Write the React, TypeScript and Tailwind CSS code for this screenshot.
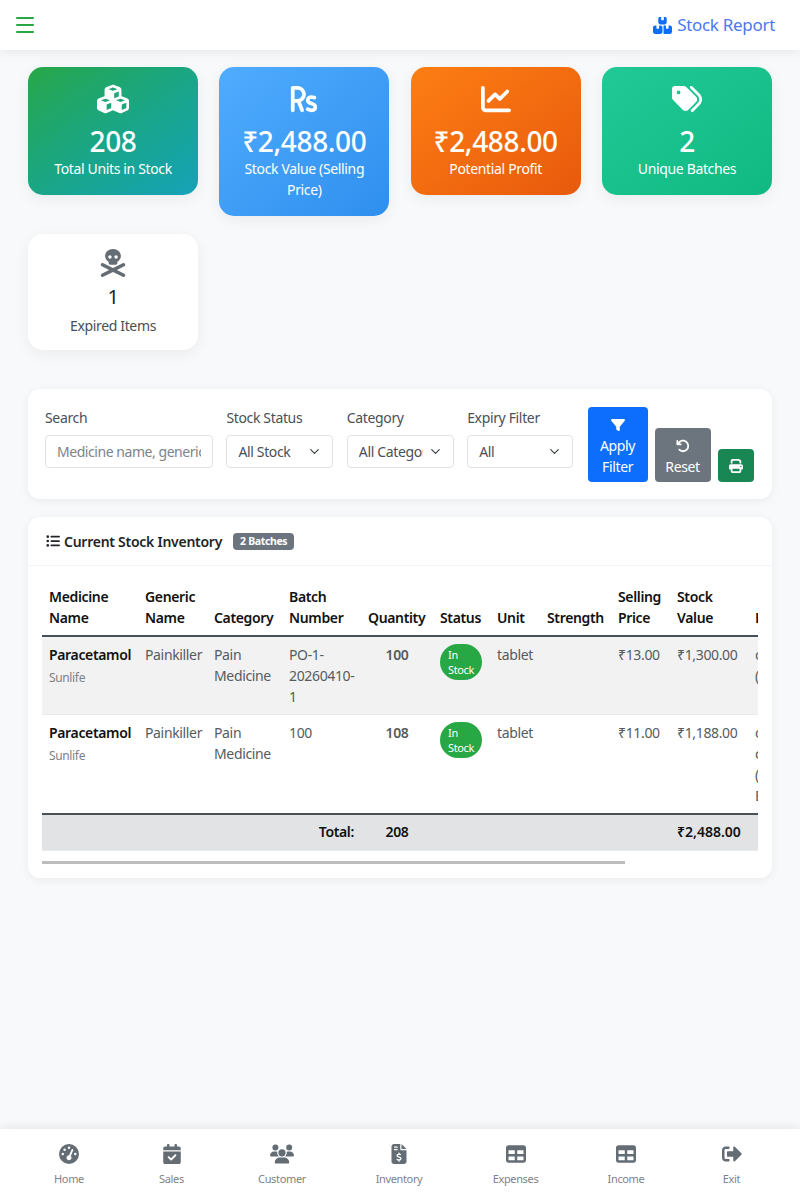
import React from "react";
import { FaCubes, FaRupeeSign, FaChartLine, FaTags, FaSkullCrossbones, FaFilter, FaArrowRotateLeft, FaPrint, FaListUl, FaGaugeHigh, FaCalendarCheck, FaUsers, FaFileInvoiceDollar, FaTable, FaBoxesStacked } from "react-icons/fa6";
import { FaSignOutAlt } from "react-icons/fa";
import { ChevronDown } from "lucide-react";

function Stat({ icon, value, label, bg }: { icon: React.ReactNode; value: string; label: string; bg: string }) {
  return (
    <div className={`rounded-[15px] px-4 pt-4 pb-4 text-center text-white shadow-[0_4px_15px_rgba(0,0,0,0.06)] ${bg}`}>
      <div className="flex h-[32px] items-center justify-center text-[30px]">{icon}</div>
      <div className="mt-[9px] text-[28px] leading-[34px] font-medium">{value}</div>
      <div className="text-[14px] leading-[21px]">{label}</div>
    </div>
  );
}

function Field({ label, value, w }: { label: string; value: string; w: string }) {
  return (
    <div className={`self-start ${w}`}>
      <div className="mb-[7px] text-[14px] leading-[21px] text-[#495057]">{label}</div>
      <div className="relative">
        <select defaultValue={value} className="h-[33px] w-full appearance-none rounded-[4px] border border-[#dee2e6] bg-white pr-[30px] pl-[11px] text-[14px] text-[#495057]">
          <option>{value}</option>
        </select>
        <ChevronDown className="pointer-events-none absolute top-[9px] right-[11px] h-[15px] w-[15px] text-[#343a40]" strokeWidth={1.8} />
      </div>
    </div>
  );
}

const th = "px-[7px] pt-2 pb-[7px] text-left align-bottom font-semibold text-[#111]";
const td = "px-[7px] pt-[7px] pb-[7px] align-top text-[#555b61]";

function Row({ batch, qty, price, value, exp, bg }: { batch: React.ReactNode; qty: string; price: string; value: string; exp: React.ReactNode; bg: string }) {
  return (
    <tr className={`border-b border-[#e9ecef] ${bg}`}>
      <td className={td}>
        <div className="font-semibold text-[#111]">Paracetamol</div>
        <div className="pt-[2px] text-[12px] leading-[21px] text-[#7b8187]">Sunlife</div>
      </td>
      <td className={td}>Painkiller</td>
      <td className={td}>Pain Medicine</td>
      <td className={td}>{batch}</td>
      <td className={`${td} text-center font-semibold text-[#111]`}>{qty}</td>
      <td className={td}>
        <span className="block w-[42px] rounded-[20px] bg-[#28a745] px-[8px] py-[3px] text-[11px] leading-[15px] text-white">In Stock</span>
      </td>
      <td className={td}>tablet</td>
      <td className={td}></td>
      <td className={td}>{price}</td>
      <td className={td}>{value}</td>
      <td className={td}>{exp}</td>
    </tr>
  );
}

function NavItem({ icon, label }: { icon: React.ReactNode; label: string }) {
  return (
    <div className="flex flex-col items-center">
      <div className="flex h-[24px] items-center text-[20px] text-[#646c74]">{icon}</div>
      <div className="mt-[5px] text-[11px] leading-[16px] text-[#7d8389]">{label}</div>
    </div>
  );
}

export default function App() {
  return (
    <div className="relative h-[1200px] overflow-hidden bg-[#f8f9fa] font-['Noto_Sans',sans-serif] tracking-[-0.35px]">
      <header className="flex h-[50px] items-center justify-between bg-white pr-[25px] pl-[16px] shadow-[0_2px_10px_rgba(0,0,0,0.08)]">
        <div className="flex w-[18px] flex-col gap-[5px]">
          <span className="h-[2px] rounded bg-[#28a745]"></span>
          <span className="h-[2px] rounded bg-[#28a745]"></span>
          <span className="h-[2px] rounded bg-[#28a745]"></span>
        </div>
        <div className="flex items-center gap-[5px] text-[17px] text-[#4c78f0]">
          <FaBoxesStacked className="text-[19px] text-[#0d6efd]" />
          <span className="tracking-[-0.3px]">Stock Report</span>
        </div>
      </header>

      <main className="px-[28px] pt-[17px]">
        <div className="grid grid-cols-4 items-start gap-x-[21.3px] gap-y-[18px]">
          <Stat bg="bg-gradient-to-br from-[#28a745] to-[#17a2b8]" icon={<FaCubes className="text-[32px]" />} value="208" label="Total Units in Stock" />
          <Stat bg="bg-gradient-to-br from-[#4facfe] to-[#2f8fee]" icon={<FaRupeeSign />} value="₹2,488.00" label="Stock Value (Selling Price)" />
          <Stat bg="bg-gradient-to-br from-[#fd7e14] to-[#e8590c]" icon={<FaChartLine />} value="₹2,488.00" label="Potential Profit" />
          <Stat bg="bg-gradient-to-br from-[#20c997] to-[#10b981]" icon={<FaTags />} value="2" label="Unique Batches" />
          <div className="rounded-[15px] bg-white px-4 pt-[15px] pb-[14px] text-center shadow-[0_4px_15px_rgba(0,0,0,0.06)]">
            <div className="flex h-[28px] items-center justify-center text-[28px] text-[#646c74]"><FaSkullCrossbones /></div>
            <div className="mt-[5px] text-[20px] leading-[30px] text-[#212529]">1</div>
            <div className="mt-[3px] text-[14px] leading-[21px] text-[#495057]">Expired Items</div>
          </div>
        </div>

        <section className="mt-[39px] flex items-end gap-[13.4px] rounded-[12px] bg-white pt-[18px] pr-[18px] pb-[17px] pl-[17px] shadow-[0_2px_10px_rgba(0,0,0,0.06)]">
          <div className="w-[168px] self-start">
            <div className="mb-[7px] text-[14px] leading-[21px] text-[#495057]">Search</div>
            <input placeholder="Medicine name, generic" className="h-[33px] w-full rounded-[4px] border border-[#dee2e6] bg-white px-[11px] text-[14px] tracking-[-0.45px] placeholder:text-[#7d8389]" />
          </div>
          <Field label="Stock Status" value="All Stock" w="w-[107px]" />
          <Field label="Category" value="All Categories" w="w-[107px]" />
          <Field label="Expiry Filter" value="All" w="w-[106px]" />
          <div className="ml-[1px] flex items-end gap-[7px]">
            <button className="flex h-[75px] w-[60px] flex-col items-center rounded-[4px] bg-[#0d6efd] pt-[11px] text-[14px] leading-[21px] text-white">
              <FaFilter className="mb-[3px] h-[14px] w-[14px]" />Apply Filter
            </button>
            <button className="flex h-[54px] w-[56px] flex-col items-center rounded-[4px] bg-[#6c757d] pt-[11px] text-[14px] leading-[21px] text-white">
              <FaArrowRotateLeft className="mb-[3px] h-[14px] w-[14px]" />Reset
            </button>
            <button className="flex h-[33px] w-[36px] items-center justify-center rounded-[4px] bg-[#198754] text-white">
              <FaPrint className="h-[14px] w-[14px]" />
            </button>
          </div>
        </section>

        <section className="mt-[18px] rounded-[12px] bg-white pb-[14px] shadow-[0_2px_10px_rgba(0,0,0,0.06)]">
          <div className="flex h-[49px] items-center gap-[11px] border-b border-[#f3f4f6] px-[18px]">
            <div className="flex items-center gap-[4px] text-[14px] font-semibold text-[#212529]">
              <FaListUl className="h-[14px] w-[14px]" />
              <span className="tracking-[-0.26px]">Current Stock Inventory</span>
            </div>
            <span className="rounded-[4px] bg-[#6c757d] px-[7px] py-[1px] text-[10.5px] leading-[15px] font-bold text-white">2 Batches</span>
          </div>
          <div className="mx-[14px] mt-[12px] overflow-hidden">
            <table className="w-[880px] table-fixed border-collapse text-[14px] leading-[21px]">
              <colgroup>
                <col className="w-[96px]" /><col className="w-[69px]" /><col className="w-[75px]" /><col className="w-[79px]" /><col className="w-[72px]" /><col className="w-[57px]" /><col className="w-[50px]" /><col className="w-[71px]" /><col className="w-[59px]" /><col className="w-[78px]" /><col className="w-[174px]" />
              </colgroup>
              <thead>
                <tr className="border-b-2 border-[#495057]">
                  <th className={th}>Medicine Name</th>
                  <th className={th}>Generic Name</th>
                  <th className={th}>Category</th>
                  <th className={th}>Batch Number</th>
                  <th className={th}>Quantity</th>
                  <th className={th}>Status</th>
                  <th className={th}>Unit</th>
                  <th className={th}>Strength</th>
                  <th className={th}>Selling Price</th>
                  <th className={th}>Stock Value</th>
                  <th className={th}>Expiry</th>
                </tr>
              </thead>
              <tbody>
                <Row bg="bg-[#f2f2f2]" batch="PO-1-20260410-1" qty="100" price="₹13.00" value="₹1,300.00" exp={<><div>c</div><div>(</div></>} />
                <Row bg="bg-white" batch="100" qty="108" price="₹11.00" value="₹1,188.00" exp={<><div>c</div><div>c</div><div>(</div><div>E</div></>} />
              </tbody>
              <tfoot>
                <tr className="h-[36px] border-t-2 border-b border-t-[#495057] border-b-[#e9ecef] bg-[#e2e3e5] font-semibold text-[#111]">
                  <td colSpan={4} className="px-[7px] pb-[2px] text-right">Total:</td>
                  <td className="pb-[2px] text-center">208</td>
                  <td colSpan={4}></td>
                  <td className="px-[7px] pb-[2px] tracking-normal">₹2,488.00</td>
                  <td></td>
                </tr>
              </tfoot>
            </table>
            <div className="mt-[10px] h-[3px] w-[583px] bg-[#bdbdbd]"></div>
          </div>
        </section>
      </main>

      <nav className="absolute right-0 bottom-0 left-0 grid h-[71px] grid-cols-[110px_95px_126px_108px_125px_96px_115px] items-start bg-white pt-[13px] pl-[14px] shadow-[0_-2px_10px_rgba(0,0,0,0.08)]">
        <NavItem icon={<FaGaugeHigh />} label="Home" />
        <NavItem icon={<FaCalendarCheck />} label="Sales" />
        <NavItem icon={<FaUsers className="text-[24px]" />} label="Customer" />
        <NavItem icon={<FaFileInvoiceDollar />} label="Inventory" />
        <NavItem icon={<FaTable />} label="Expenses" />
        <NavItem icon={<FaTable />} label="Income" />
        <NavItem icon={<FaSignOutAlt />} label="Exit" />
      </nav>
    </div>
  );
}
